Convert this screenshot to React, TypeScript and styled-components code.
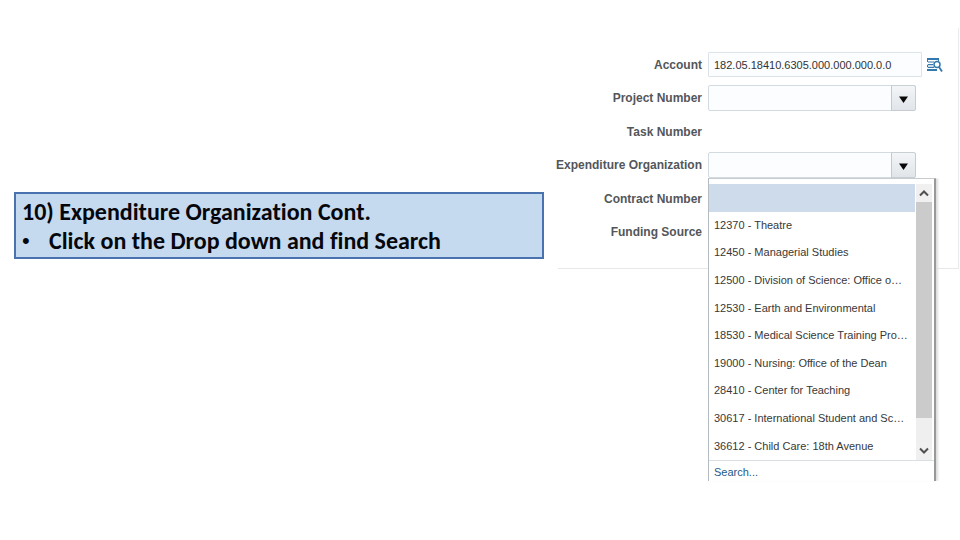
import React, { useId, useState } from "react";
import styled, { createGlobalStyle } from "styled-components";

const GlobalStyle = createGlobalStyle`
  * { box-sizing: border-box; }
  body { margin: 0; background: #fff; font-family: "Liberation Sans", Arial, sans-serif; }
`;

const Slide = styled.main`
  display: grid;
  grid-template-columns: 530fr 401fr;
  column-gap: 14px;
  align-items: start;
  min-height: 100vh;
  padding: 28px 1px 28px 14px;
`;

const Note = styled.section`
  margin-top: 164px;
  padding: 3px 6px 2px;
  border: 2px solid #4a72ae;
  background: #c5daef;
  color: #05070c;
  font-family: Carlito, Calibri, Lato, sans-serif;
  font-size: 24px;
  font-weight: 700;
  font-variant-ligatures: none;
  line-height: 29px;
`;

const NoteTitle = styled.h1`
  margin: 0;
  font: inherit;
  font-variant-ligatures: none;
`;

const NoteList = styled.ul`
  margin: 0;
  padding: 0;
  list-style: none;
`;

const NoteItem = styled.li`
  display: flex;

  &::before {
    content: "•";
    width: 27px;
    font-family: "Liberation Sans", Arial, sans-serif;
    font-size: 22px;
    font-weight: 400;
  }
`;

const Form = styled.form`
  display: grid;
  grid-template-columns: 144px 1fr;
  grid-auto-rows: 1fr;
  column-gap: 6px;
  align-items: center;
  height: 241px;
  padding: 20px 0 19px;
  border-right: 1px solid #e9ebed;
  border-bottom: 1px solid #e6e8ea;
`;

const Label = styled.label`
  justify-self: end;
  color: #53565a;
  font-size: 12px;
  font-weight: 700;
  line-height: 16px;
  white-space: nowrap;
`;

const Field = styled.div`
  position: relative;
  display: flex;
  align-items: center;
  gap: 5px;
`;

const TextInput = styled.input`
  width: 214px;
  height: 25px;
  padding: 1px 5px 0;
  border: 1px solid #dce3e9;
  border-radius: 1px;
  background: #fbfdff;
  color: #333;
  font: 11px "Liberation Sans", Arial, sans-serif;
`;

const IconButton = styled.button`
  display: flex;
  padding: 0;
  border: 0;
  background: none;
`;

const ComboBox = styled.div`
  display: flex;
  width: 208px;
  height: 26px;
  border: 1px solid #d3dae0;
  border-radius: 2px;
  background: #fbfdff;
`;

const ComboInput = styled.input`
  flex: 1;
  min-width: 0;
  padding: 0 5px;
  border: 0;
  background: transparent;
  color: #333;
  font: 11px "Liberation Sans", Arial, sans-serif;
`;

const ComboButton = styled.button`
  display: flex;
  align-items: center;
  justify-content: center;
  width: 24px;
  padding: 2px 0 0;
  border: 0;
  border-left: 1px solid #c3c9ce;
  border-radius: 0 2px 2px 0;
  background: linear-gradient(#f3f5f7, #e1e5e9);
  box-shadow: 0 0 0 1px #c6ccd1;
  clip-path: inset(-1px -1px -1px 0);
`;

const Menu = styled.div`
  position: absolute;
  z-index: 1;
  top: 100%;
  left: 0;
  width: 228px;
  height: 303px;
  padding-top: 5px;
  border: 1px solid #b4bcc2;
  border-right: 2px solid #999;
  border-bottom: 0;
  background: #fff;
  box-shadow: 2px 0 2px #ddd;
  clip-path: inset(0 -4px 0 0);
`;

const MenuBody = styled.div`
  display: flex;
  gap: 1px;
  height: 277px;
  padding-right: 2px;
  border-bottom: 1px solid #d8e0e3;
`;

const Options = styled.ul`
  display: grid;
  flex: 1;
  grid-auto-rows: 1fr;
  min-width: 0;
  margin: 0;
  padding: 0;
  list-style: none;
`;

const Option = styled.li<{ $active?: boolean }>`
  overflow: hidden;
  padding: 4px 7px 0 5px;
  background: ${({ $active }) => ($active ? "#cddbeb" : "#fff")};
  color: #383838;
  font-size: 11px;
  line-height: 18px;
  text-overflow: ellipsis;
  white-space: nowrap;
`;

const ScrollBar = styled.div`
  display: flex;
  flex-direction: column;
  width: 16px;
  background: #efefef;
`;

const ScrollButton = styled.button`
  display: flex;
  align-items: center;
  justify-content: center;
  height: 18px;
  padding: 0;
  border: 0;
  background: #f0f0f0;
`;

const ScrollTrack = styled.div`
  flex: 1;
`;

const ScrollThumb = styled.div`
  height: 90%;
  background: #cbcbcb;
`;

const SearchLink = styled.a`
  display: block;
  padding: 3px 5px;
  color: #265a85;
  font-size: 11px;
  line-height: 16px;
  text-decoration: none;
`;

const organizations = [
  "",
  "12370 - Theatre",
  "12450 - Managerial Studies",
  "12500 - Division of Science: Office o…",
  "12530 - Earth and Environmental",
  "18530 - Medical Science Training Pro…",
  "19000 - Nursing: Office of the Dean",
  "28410 - Center for Teaching",
  "30617 - International Student and Sc…",
  "36612 - Child Care: 18th Avenue",
];

function AccountSearchIcon() {
  return (
    <svg width="16" height="16" viewBox="0 0 16 16" fill="none" stroke="#3478ad" aria-hidden="true">
      <path d="M0 2h12M0 13h10" strokeWidth="1.8" />
      <path d="M1 5h6M1 7.7h5M1 10.3h6" strokeWidth="1.2" />
      <path d="M.5 2v3M.5 7.7v2.6M11.5 2v2" />
      <circle cx="10" cy="7.5" r="3" fill="#fff" strokeWidth="1.5" />
      <path d="M12 10l3 4.5" strokeWidth="1.8" />
    </svg>
  );
}

function TriangleIcon() {
  return (
    <svg width="9" height="7" viewBox="0 0 9 7" aria-hidden="true">
      <path d="M0 .5h9L4.5 7z" fill="#080808" />
    </svg>
  );
}

function ChevronIcon({ down = false }: { down?: boolean }) {
  return (
    <svg width="10" height="8" viewBox="0 0 10 8" fill="none" stroke="#505050" strokeWidth="2" aria-hidden="true">
      <path d={down ? "M1 1.5l4 4 4-4" : "M1 6.5l4-4 4 4"} />
    </svg>
  );
}

function OrganizationMenu() {
  return (
    <Menu>
      <MenuBody>
        <Options role="listbox" aria-label="Expenditure Organization">
          {organizations.map((name, index) => (
            <Option key={name} role="option" aria-selected={index === 0} $active={index === 0}>
              {name}
            </Option>
          ))}
        </Options>
        <ScrollBar>
          <ScrollButton type="button" aria-label="Scroll up"><ChevronIcon /></ScrollButton>
          <ScrollTrack><ScrollThumb /></ScrollTrack>
          <ScrollButton type="button" aria-label="Scroll down"><ChevronIcon down /></ScrollButton>
        </ScrollBar>
      </MenuBody>
      <SearchLink href="#search">Search...</SearchLink>
    </Menu>
  );
}

function ComboField({ label, menu = false }: { label: string; menu?: boolean }) {
  const id = useId();
  const [open, setOpen] = useState(menu);
  return (
    <>
      <Label htmlFor={id}>{label}</Label>
      <Field>
        <ComboBox>
          <ComboInput id={id} role="combobox" aria-expanded={open} />
          <ComboButton type="button" aria-label={`Show ${label} options`} onClick={() => menu && setOpen(!open)}>
            <TriangleIcon />
          </ComboButton>
        </ComboBox>
        {open && <OrganizationMenu />}
      </Field>
    </>
  );
}

function EmptyField({ label }: { label: string }) {
  return (
    <>
      <Label as="span">{label}</Label>
      <span />
    </>
  );
}

export default function App() {
  return (
    <>
      <GlobalStyle />
      <Slide>
        <Note>
          <NoteTitle>10) Expenditure Organization Cont.</NoteTitle>
          <NoteList>
            <NoteItem>Click on the Drop down and find Search</NoteItem>
          </NoteList>
        </Note>
        <Form>
          <Label htmlFor="account">Account</Label>
          <Field>
            <TextInput id="account" defaultValue="182.05.18410.6305.000.000.000.0.0" />
            <IconButton type="button" aria-label="Search accounts"><AccountSearchIcon /></IconButton>
          </Field>
          <ComboField label="Project Number" />
          <EmptyField label="Task Number" />
          <ComboField label="Expenditure Organization" menu />
          <EmptyField label="Contract Number" />
          <EmptyField label="Funding Source" />
        </Form>
      </Slide>
    </>
  );
}
